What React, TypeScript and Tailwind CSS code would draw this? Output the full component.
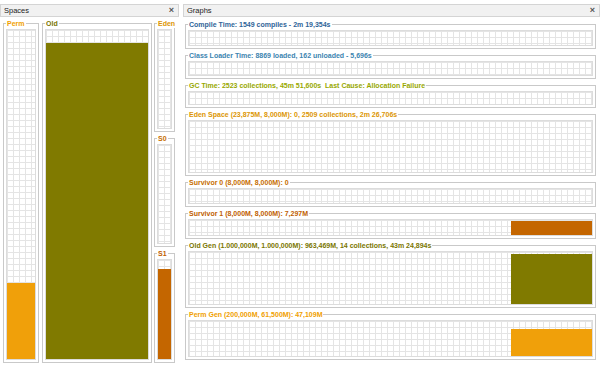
import clsx from "clsx";

/** Light chart grid used inside every space / graph box. */
const gridBg =
  "border border-[#dcdcdc] bg-white bg-[linear-gradient(to_right,#e4e4e4_1px,transparent_1px),linear-gradient(to_bottom,#e4e4e4_1px,transparent_1px)] bg-size-[6px_6px]";

interface BoxProps {
  label: string;
  color: string;
  className?: string;
  children?: React.ReactNode;
}

/** Titled group box, like a Swing TitledBorder. */
function Box({ label, color, className, children }: BoxProps) {
  return (
    <fieldset
      className={clsx(
        "min-w-0 border border-[#c9c9c9] px-[2px] pt-[1px] pb-[2px]",
        className,
      )}
    >
      <legend
        className={clsx(
          "ml-0 px-[1px] text-[7px] font-bold leading-[9px] whitespace-nowrap",
          color,
        )}
      >
        {label}
      </legend>
      {children}
    </fieldset>
  );
}

function PanelHeader({ title }: { title: string }) {
  return (
    <div className="h-[13px] shrink-0 flex items-center justify-between border border-[#d4d4d4] bg-[#f1f1f1] pl-[3px] pr-[4px] text-[7.5px] text-[#222]">
      <span>{title}</span>
      <span className="text-[9px] leading-none font-bold text-[#555]">×</span>
    </div>
  );
}

/** Vertical memory-pool gauge in the Spaces panel. */
function SpaceGauge({
  label,
  color,
  fill,
  pct,
  boxClass,
  gridClass,
}: {
  label: string;
  color: string;
  fill: string;
  pct: number;
  boxClass: string;
  gridClass: string;
}) {
  return (
    <Box label={label} color={color} className={boxClass}>
      <div className={clsx(gridBg, gridClass, "flex items-end")}>
        {pct > 0 && (
          <div className={clsx("w-full", fill)} style={{ height: `${pct}%` }} />
        )}
      </div>
    </Box>
  );
}

const graphs = [
  {
    label: "Compile Time: 1549 compiles - 2m 19,354s",
    color: "text-[#2f6498]",
    h: "h-[16px]",
  },
  {
    label: "Class Loader Time: 8869 loaded, 162 unloaded - 5,696s",
    color: "text-[#3c84b0]",
    h: "h-[15px]",
  },
  {
    label:
      "GC Time: 2523 collections, 45m 51,600s\u00a0\u00a0Last Cause: Allocation Failure",
    color: "text-[#98a800]",
    h: "h-[14px]",
  },
  {
    label: "Eden Space (23,875M, 8,000M): 0, 2509 collections, 2m 26,706s",
    color: "text-[#dc9604]",
    h: "h-[53px]",
  },
  {
    label: "Survivor 0 (8,000M, 8,000M): 0",
    color: "text-[#c66e00]",
    h: "h-[16px]",
  },
  {
    label: "Survivor 1 (8,000M, 8,000M): 7,297M",
    color: "text-[#c06000]",
    h: "h-[17px]",
    fill: "bg-[#c46600]",
    pct: 91,
  },
  {
    label: "Old Gen (1.000,000M, 1.000,000M): 963,469M, 14 collections, 43m 24,894s",
    color: "text-[#7a7600]",
    h: "h-[54px]",
    fill: "bg-[#807a00]",
    pct: 97,
  },
  {
    label: "Perm Gen (200,000M, 61,500M): 47,109M",
    color: "text-[#f0a000]",
    h: "h-[37px]",
    fill: "bg-[#f0a00a]",
    pct: 76,
  },
];

export default function App() {
  return (
    <div className="w-[600px] h-[366px] overflow-hidden bg-white pt-[4px] flex gap-[4px] font-['Liberation_Sans',Arial,sans-serif]">
      {/* Spaces panel */}
      <section className="w-[179px] shrink-0 flex flex-col">
        <PanelHeader title="Spaces" />
        <div className="flex pl-[3px] pt-[2px]">
          <SpaceGauge
            label="Perm"
            color="text-[#f0a000]"
            fill="bg-[#f0a00a]"
            pct={23}
            boxClass="w-[36px] mr-[3px]"
            gridClass="h-[331px]"
          />
          <SpaceGauge
            label="Old"
            color="text-[#7a7600]"
            fill="bg-[#807a00]"
            pct={96}
            boxClass="w-[110px] mr-[2px]"
            gridClass="h-[331px]"
          />
          <div className="w-[21px] flex flex-col gap-[2px]">
            <SpaceGauge
              label="Eden"
              color="text-[#dc9604]"
              fill="bg-[#dc9604]"
              pct={0}
              boxClass=""
              gridClass="h-[100px]"
            />
            <SpaceGauge
              label="S0"
              color="text-[#c66e00]"
              fill="bg-[#c66e00]"
              pct={0}
              boxClass=""
              gridClass="h-[100px]"
            />
            <SpaceGauge
              label="S1"
              color="text-[#c06000]"
              fill="bg-[#c46600]"
              pct={91}
              boxClass=""
              gridClass="h-[101px]"
            />
          </div>
        </div>
      </section>

      {/* Graphs panel */}
      <section className="flex-1 min-w-0 flex flex-col">
        <PanelHeader title="Graphs" />
        <div className="flex flex-col gap-[2px] pl-[2px] pr-[4px] pt-[3px]">
          {graphs.map((g) => (
            <Box key={g.label} label={g.label} color={g.color}>
              <div className={clsx(gridBg, g.h, "flex items-end justify-end")}>
                {g.fill && (
                  <div
                    className={clsx("w-[81px]", g.fill)}
                    style={{ height: `${g.pct}%` }}
                  />
                )}
              </div>
            </Box>
          ))}
        </div>
      </section>
    </div>
  );
}
